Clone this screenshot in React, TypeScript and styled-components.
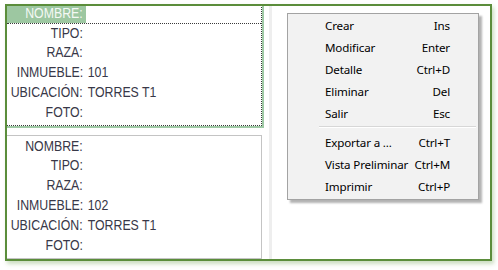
import styled, { createGlobalStyle } from "styled-components";

const GlobalStyle = createGlobalStyle`
  html, body {
    margin: 0;
    padding: 0;
    background: #ffffff;
  }
`;

type Record = {
  id: string;
  fields: { label: string; value: string }[];
};

const records: Record[] = [
  {
    id: "1",
    fields: [
      { label: "NOMBRE:", value: "" },
      { label: "TIPO:", value: "" },
      { label: "RAZA:", value: "" },
      { label: "INMUEBLE:", value: "101" },
      { label: "UBICACIÓN:", value: "TORRES T1" },
      { label: "FOTO:", value: "" },
    ],
  },
  {
    id: "2",
    fields: [
      { label: "NOMBRE:", value: "" },
      { label: "TIPO:", value: "" },
      { label: "RAZA:", value: "" },
      { label: "INMUEBLE:", value: "102" },
      { label: "UBICACIÓN:", value: "TORRES T1" },
      { label: "FOTO:", value: "" },
    ],
  },
];

type MenuEntry = { label: string; shortcut: string } | "sep";

const menu: MenuEntry[] = [
  { label: "Crear", shortcut: "Ins" },
  { label: "Modificar", shortcut: "Enter" },
  { label: "Detalle", shortcut: "Ctrl+D" },
  { label: "Eliminar", shortcut: "Del" },
  { label: "Salir", shortcut: "Esc" },
  "sep",
  { label: "Exportar a ...", shortcut: "Ctrl+T" },
  { label: "Vista Preliminar", shortcut: "Ctrl+M" },
  { label: "Imprimir", shortcut: "Ctrl+P" },
];

const App = () => {
  return (
    <Page>
      <GlobalStyle />
      <Frame>
        <CardList>
          {records.map((r, ri) => (
            <Card key={r.id} $selected={ri === 0}>
              {r.fields.map((f, fi) => {
                const active = ri === 0 && fi === 0;
                return (
                  <Row key={f.label} $focused={active}>
                    <Label $active={active}>
                      <LabelText>{f.label}</LabelText>
                    </Label>
                    <Value>{f.value}</Value>
                  </Row>
                );
              })}
            </Card>
          ))}
        </CardList>
        <Splitter />
        <RightPane />
      </Frame>

      {/* menú contextual */}
      <Menu>
        {menu.map((m, i) =>
          m === "sep" ? (
            <Sep key={i} />
          ) : (
            <MenuItem key={m.label}>
              <span>{m.label}</span>
              <Shortcut>{m.shortcut}</Shortcut>
            </MenuItem>
          )
        )}
      </Menu>
    </Page>
  );
};

export default App;

/* styled */
const Page = styled.div`
  position: relative;
  width: 498px;
  height: 270px;
  overflow: hidden;
  background: #fff;
`;
const Frame = styled.div`
  box-sizing: border-box;
  margin: 4px 0 0 5px;
  width: 487px;
  height: 257px;
  border: 2px solid #5b8d3b;
  box-shadow: 2px 3px 4px rgba(110, 160, 80, 0.35);
  background: #fff;
  display: flex;
  overflow: hidden;
`;
const CardList = styled.div`
  width: 256px;
  margin: -4px 0 0 -1px;
  display: flex;
  flex-direction: column;
  gap: 9px;
  flex-shrink: 0;
`;
const Card = styled.div<{ $selected?: boolean }>`
  box-sizing: border-box;
  width: 256px;
  padding: 0 0 3px;
  background: #fff;
  border: 1px ${(p) => (p.$selected ? "dotted #3a3a3a" : "solid #c4c4c4")};
  box-shadow: ${(p) => (p.$selected ? "1px 1px 0 1px #9fc9a5" : "none")};
`;
const Row = styled.div<{ $focused?: boolean }>`
  display: flex;
  align-items: center;
  height: 19.8px;
  border-bottom: ${(p) => (p.$focused ? "1px dotted #3a3a3a" : "none")};
  margin-bottom: ${(p) => (p.$focused ? "-1px" : "0")};
  font-family: "Liberation Sans", Arial, sans-serif;
  font-size: 14.5px;
  color: #383848;
`;
const Label = styled.div<{ $active?: boolean }>`
  width: 79px;
  height: 100%;
  display: flex;
  align-items: center;
  justify-content: flex-end;
  padding-right: 3px;
  box-sizing: border-box;
  background: ${(p) => (p.$active ? "#9dc7a1" : "transparent")};
  color: ${(p) => (p.$active ? "#f4f8f4" : "inherit")};
`;
const LabelText = styled.span`
  display: inline-block;
  white-space: nowrap;
  transform: scaleX(0.85);
  transform-origin: right center;
`;
const Value = styled.div`
  padding-left: 2px;
  white-space: nowrap;
  transform: scaleX(0.85);
  transform-origin: left center;
`;
const Splitter = styled.div`
  width: 3px;
  margin-left: 7px;
  background: #eeeeee;
  flex-shrink: 0;
`;
const RightPane = styled.div`
  flex: 1;
`;
const Menu = styled.div`
  position: absolute;
  left: 287px;
  top: 13px;
  box-sizing: border-box;
  width: 192px;
  padding: 0 0 2px;
  background: #f2f2f2;
  border: 1px solid #a3a3a3;
  box-shadow: 3px 3px 2px rgba(0, 0, 0, 0.3);
  font-family: "Noto Sans", "Open Sans", sans-serif;
  font-size: 11.6px;
  letter-spacing: -0.15px;
  color: #000;
`;
const MenuItem = styled.div`
  display: flex;
  justify-content: space-between;
  align-items: center;
  height: 22px;
  padding: 0 28px 0 37px;
  white-space: nowrap;
`;
const Shortcut = styled.span`
  text-align: right;
`;
const Sep = styled.div`
  height: 1px;
  margin: 2px 2px 3px 31px;
  background: #d7d7d7;
  border-bottom: 1px solid #fff;
`;
